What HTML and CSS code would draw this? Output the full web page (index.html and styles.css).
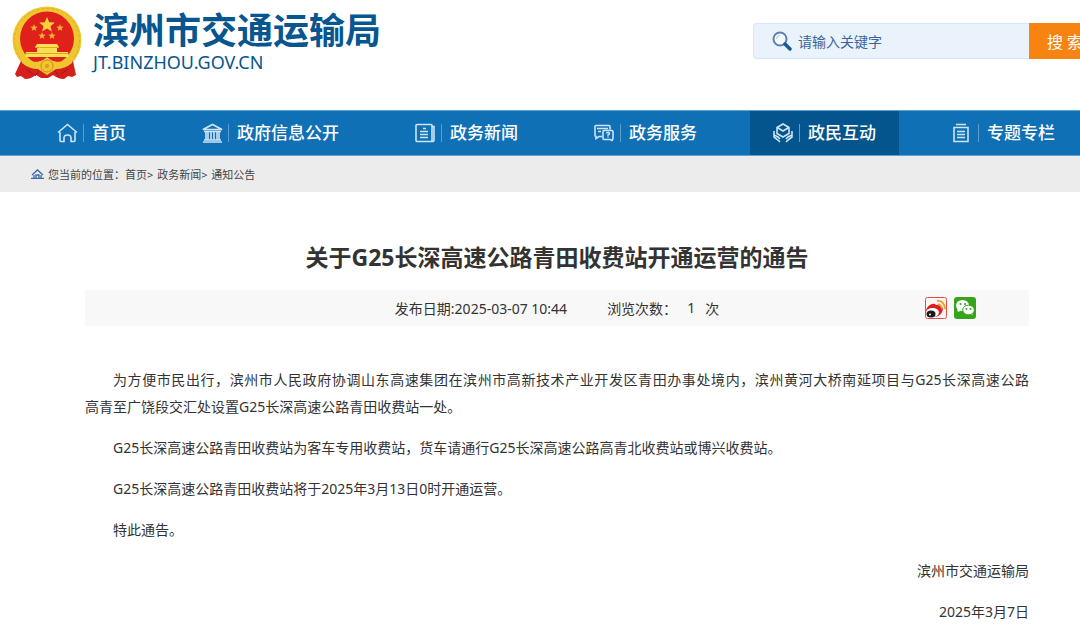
FILE: index.html
```html
<!DOCTYPE html>
<html lang="zh-CN">
<head>
<meta charset="utf-8">
<meta name="viewport" content="width=device-width, initial-scale=1">
<title>关于G25长深高速公路青田收费站开通运营的通告</title>
<link rel="stylesheet" href="styles.css">
</head>
<body>
<header class="header">
  <a class="brand" href="#">
    <svg class="emblem" viewBox="0 0 70 74" aria-hidden="true">
      <ellipse cx="35" cy="34" rx="34.500" ry="33.500" fill="#efc630"/>
      <ellipse cx="35" cy="34" rx="32.500" ry="31.500" fill="none" stroke="#e0ac26" stroke-dasharray="3 2"/>
      <circle cx="35" cy="32.500" r="27" fill="#df201b"/>
      <path fill="#f6d13c" d="M35 11l2.200 5.200 5.600.4-4.300 3.600 1.400 5.400-4.900-3-4.900 3 1.400-5.400-4.300-3.600 5.600-.4z"/>
      <g fill="#efb136">
        <path id="star" d="M22 18l1 2.500 2.600.2-2 1.700.7 2.500-2.300-1.400-2.300 1.400.7-2.500-2-1.700 2.600-.2z"/>
        <use href="#star" x="26"/><use href="#star" x="8" y="8"/><use href="#star" x="18" y="8"/>
      </g>
      <path fill="#fae052" d="M25 38h20l2 3h-24zM25 41h20v5H25zM14 46h42l1 5H13z"/>
      <path stroke="#e6a424" d="M23 41.500h24M14 47.500h42"/>
      <path fill="#d51f1c" d="M9 55c7 4 13 6 19 6l7-5 7 5c6 0 12-2 19-6l3 14-4 2-4-1-4 3c-5 0-8-2-11-4l-5 3H29l-5-3c-3 2-6 4-11 4l-4-3-4 1-2-3z"/>
      <path fill="#efc630" d="M8 49c9 8 17 8 23 5l4-3 4 3c6 3 14 3 23-5l-2 8c-5 4-10 6-16 6l-9 6-9-6c-6 0-11-2-16-6z"/>
      <circle cx="35" cy="60" r="6" fill="#efc630" stroke="#cf8b20"/>
      <circle cx="35" cy="60" r="2" fill="#d99b20"/>
      <path fill="none" stroke="#a91519" d="M14 63l7 5M56 63l-7 5M27 65l-4 5M43 65l4 5"/>
    </svg>
    <span class="brand-text">
      <span class="brand-name">滨州市交通运输局</span>
      <span class="brand-domain">JT.BINZHOU.GOV.CN</span>
    </span>
  </a>
  <form class="search" role="search">
    <label class="search-field" for="keyword">
      <svg class="search-icon" viewBox="0 0 20 20" aria-hidden="true">
        <circle cx="8" cy="8" r="6.500" fill="#f5faff" stroke="#5b82b1" stroke-width="2"/>
        <path d="M4.500 8A3.500 3.500 0 0 1 8 4.500" fill="none" stroke="#a9c3de"/>
        <path d="M13 13l5 5" stroke="#16599b" stroke-width="3.500" stroke-linecap="round"/>
      </svg>
      <input class="search-input" id="keyword" type="text" placeholder="请输入关键字" aria-label="请输入关键字">
    </label>
    <button class="search-button" type="button">搜 索</button>
  </form>
</header>

<nav class="nav">
  <a class="nav-item" href="#">
    <svg class="nav-icon" viewBox="0 0 21 20" aria-hidden="true"><path d="M1 9.500l9.500-8 9.500 8M3 9v8.500q0 1 1 1h3V15q0-3 3.500-3t3.500 3v3.500h3q1 0 1-1V9"/></svg>
    <span class="nav-label">首页</span>
  </a>
  <a class="nav-item" href="#">
    <svg class="nav-icon" viewBox="0 0 21 20" aria-hidden="true"><path d="M1 6.500l9.500-5 9.500 5zM2 8.500h17M4 9v8M6 9v8M9 9v8M12 9v8M15 9v8M17 9v8M2 17h17M1 19h19"/></svg>
    <span class="nav-label">政府信息公开</span>
  </a>
  <a class="nav-item" href="#">
    <svg class="nav-icon" viewBox="0 0 21 20" aria-hidden="true"><path d="M2 1.500h14q1 0 1 1v16H2q-1 0-1-1v-15q0-1 1-1zM17 3.500h2v14q0 1-1 1h-2M8 5.500h3M5 8.500h8M5 11.500h8M5 14.500h8"/></svg>
    <span class="nav-label">政务新闻</span>
  </a>
  <a class="nav-item" href="#">
    <svg class="nav-icon" viewBox="0 0 21 20" aria-hidden="true"><path d="M8 13.500H5l-3 2v-2q-1 0-1-1v-9q0-1 1-1h13q1 0 1 1v3M3 5.500h11M4 8.500h3M10 7.500h8q1 0 1 1v7l-1 2-2-1h-6q-1 0-1-1v-7q0-1 1-1zM12.500 10.500q0-1 1.500-1t1.500 1-1.500 1.500v.8M14 13.500v1"/></svg>
    <span class="nav-label">政务服务</span>
  </a>
  <a class="nav-item nav-item-active" href="#">
    <svg class="nav-icon" viewBox="0 0 21 20" aria-hidden="true"><path d="M10 1l6 3.500v6L10 14l-6-3.500v-6zM5 5l5 3 5-3M1 8v6l4 3 2 2M1 12l4 2 2 2M19 8v6l-4 3-2 2M19 12l-4 2-2 2"/></svg>
    <span class="nav-label">政民互动</span>
  </a>
  <a class="nav-item" href="#">
    <svg class="nav-icon" viewBox="0 0 21 20" aria-hidden="true"><path d="M4 1.500h10M2 4.500h14v14H2zM5 8.500h8M5 11.500h8M5 14.500h8"/></svg>
    <span class="nav-label">专题专栏</span>
  </a>
</nav>

<div class="crumbs">
  <svg class="crumbs-icon" viewBox="0 0 13 10" aria-hidden="true"><path d="M1 6l5.500-5L12 6M3 6v3M10 6v3M0 9.500h13M5 9V6h3v3" fill="none" stroke="#3c69a5" stroke-width="1.300"/></svg>
  <span>您当前的位置：<a href="#">首页</a>&gt; <a class="crumb-next" href="#">政务新闻</a>&gt; <a class="crumb-next" href="#">通知公告</a></span>
</div>

<main class="article">
  <h1 class="title">关于G25长深高速公路青田收费站开通运营的通告</h1>
  <div class="meta">
    <div class="meta-info">
      <span>发布日期:2025-03-07 10:44</span>
      <span class="views"><span>浏览次数：</span><span>1</span><span>次</span></span>
    </div>
    <div class="share">
      <a class="share-link" href="#" aria-label="分享到微博">
        <svg class="share-icon" viewBox="0 0 22 22" aria-hidden="true">
          <rect x=".5" y=".5" width="21" height="21" rx="2" fill="#fff6f2" stroke="#d5534c"/>
          <path fill="#dc1e25" d="M1 13q2-5 6-6 3-1 4 1 4-1 5 1 3 2 1 6-2 5-9 5-7 0-7-7z"/>
          <ellipse cx="7.500" cy="15.500" rx="6.500" ry="4.500" fill="#fff"/>
          <ellipse cx="6" cy="17" rx="4.500" ry="3.500" fill="#191919"/>
          <circle cx="5" cy="17.500" r="1" fill="#fff"/>
          <path fill="none" stroke="#f49b28" stroke-width="1.800" d="M12 4q7-1 8 8M13 7.500q3 0 4 4"/>
        </svg>
      </a>
      <a class="share-link" href="#" aria-label="分享到微信">
        <svg class="share-icon" viewBox="0 0 22 22" aria-hidden="true">
          <rect width="22" height="22" rx="3" fill="#36a51c"/>
          <path fill="#fff" d="M3 12l1 3 3-1.500zM17 15l2 3-4-1.500z"/>
          <ellipse cx="8.500" cy="8.500" rx="6.500" ry="5.500" fill="#fff"/>
          <ellipse cx="14.500" cy="13" rx="5.800" ry="4.800" fill="#fff" stroke="#36a51c"/>
          <g fill="#36a51c"><circle cx="6.500" cy="7" r="1"/><circle cx="11" cy="7" r="1"/><circle cx="12.500" cy="12" r="1"/><circle cx="16.500" cy="12" r="1"/></g>
        </svg>
      </a>
    </div>
  </div>
  <div class="content">
    <p>为方便市民出行，滨州市人民政府协调山东高速集团在滨州市高新技术产业开发区青田办事处境内，滨州黄河大桥南延项目与G25长深高速公路<span class="road">高青至广饶段</span>交汇处设置G25长深高速公路青田收费站一处。</p>
    <p>G25长深高速公路青田收费站为客车专用收费站，货车请通行G25长深高速公路高青北收费站或博兴收费站。</p>
    <p>G25长深高速公路青田收费站将于2025年3月13日0时开通运营。</p>
    <p>特此通告。</p>
    <p class="sign">滨州市交通运输局</p>
    <p class="sign">2025年3月7日</p>
  </div>
</main>
</body>
</html>
```
FILE: styles.css
```css
* {
  box-sizing: border-box;
}

body {
  margin: 0;
  overflow-x: hidden;
  background: #fff;
  color: #333;
  font-family: "Noto Sans", "Noto Sans CJK SC", sans-serif;
  font-size: 14px;
}

a {
  color: inherit;
  text-decoration: none;
}

.header {
  display: flex;
  justify-content: space-between;
  align-items: flex-start;
  height: 110px;
  padding-left: 12px;
  overflow: hidden;
}

.brand {
  display: flex;
  gap: 11px;
  padding-top: 6px;
  color: #07568f;
}

.emblem {
  width: 70px;
  height: 74px;
}

.brand-text {
  display: flex;
  flex-direction: column;
}

.brand-name {
  font-size: 36px;
  font-weight: 700;
  line-height: 50px;
}

.brand-domain {
  font-size: 18px;
  line-height: 12px;
}

.search {
  display: flex;
  height: 36px;
  margin: 23px -21px 0 0;
}

.search-field {
  display: flex;
  align-items: center;
  gap: 6px;
  width: 276px;
  padding-left: 18px;
  border: 1px solid #d5e7fa;
  border-right: 0;
  border-radius: 4px 0 0 4px;
  background: #eaf2fb;
}

.search-icon {
  flex: none;
  width: 20px;
  height: 20px;
}

.search-input {
  flex: 1;
  min-width: 0;
  padding: 0;
  border: 0;
  outline: 0;
  background: none;
  color: #3a66a0;
  font: inherit;
}

.search-input::placeholder {
  color: #3a66a0;
  opacity: 1;
}

.search-button {
  width: 72px;
  padding: 0;
  border: 0;
  background: #f78411;
  color: #fff;
  font: inherit;
  font-size: 16px;
}

.nav {
  display: flex;
  gap: 30px;
  height: 46px;
  padding-left: 34px;
  border-top: 1px solid #5ea3d3;
  border-bottom: 1px solid #5ea3d3;
  background: #1070b5;
  color: #fff;
}

.nav-item {
  display: flex;
  flex: none;
  align-items: center;
  gap: 5px;
  padding: 0 23px;
}

.nav-item-active {
  background: #04558d;
}

.nav-icon {
  width: 21px;
  height: 20px;
  fill: none;
  stroke: #cce4f5;
  stroke-width: 1.6;
}

.nav-label {
  padding-left: 8px;
  border-left: 1px solid #5c9fce;
  font-size: 17px;
  font-weight: 500;
  line-height: 18px;
}

.crumbs {
  display: flex;
  align-items: center;
  gap: 4px;
  height: 36px;
  padding-left: 31px;
  background: #ececec;
  color: #444;
  font-size: 11px;
}

.crumbs-icon {
  width: 13px;
  height: 10px;
}

.crumb-next {
  margin-left: 1px;
}

.article {
  padding: 48px 51px 0 85px;
}

.title {
  margin: 0 0 16px;
  font-size: 23px;
  font-weight: 700;
  line-height: 34px;
  text-align: center;
}

.meta {
  display: grid;
  grid-template-columns: 1fr auto 1fr;
  align-items: center;
  height: 36px;
  background: #f8f8f8;
}

.meta-info {
  display: flex;
  grid-column: 2;
  gap: 40px;
}

.views {
  display: flex;
  gap: 10px;
}

.share {
  display: flex;
  justify-content: flex-end;
  gap: 7px;
  padding-right: 53px;
}

.share-link,
.share-icon {
  display: block;
  width: 22px;
  height: 22px;
}

.content {
  padding-top: 40px;
  line-height: 27px;
}

.content p {
  margin: 0 0 14px;
  text-align: justify;
  text-indent: 28px;
}

.content .sign {
  text-align: right;
}

.content p:last-child {
  margin-bottom: 0;
}

.road {
  white-space: nowrap;
}
```
